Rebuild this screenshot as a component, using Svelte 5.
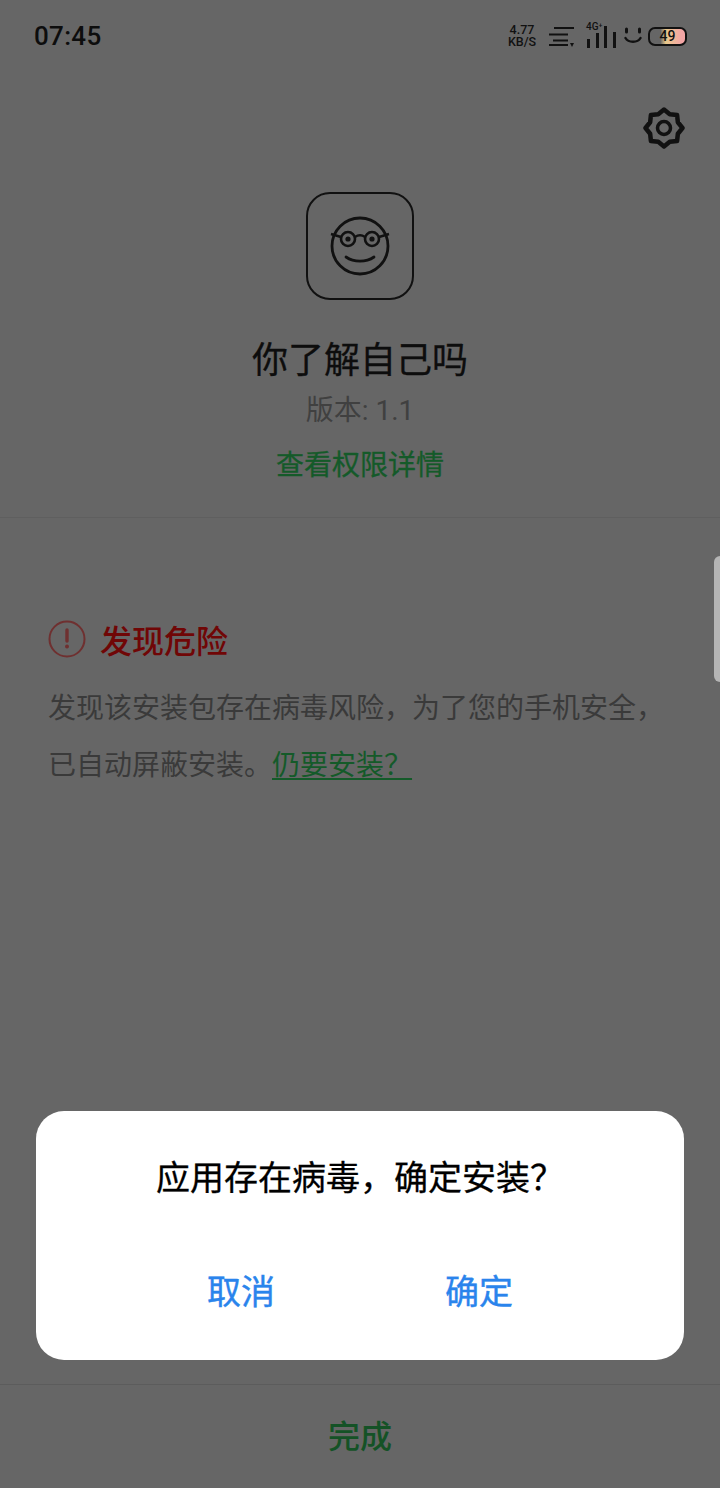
<script>
  const bars = [
    { h: 9 },
    { h: 15 },
    { h: 22 },
    { h: 16 }
  ];
  const c = 21;
  const gear = Array.from({ length: 16 }, (_, i) => {
    const r = i % 2 === 0 ? 18.500 : 15;
    const a = (i * Math.PI) / 8 - Math.PI / 2;
    return `${(c + r * Math.cos(a)).toFixed(2)},${(c + r * Math.sin(a)).toFixed(2)}`;
  }).join(" ");
</script>

<div class="page">
  <header class="status">
    <span class="time">07:45</span>
    <div class="status-icons">
      <span class="speed"><span>4.77</span><span>KB/S</span></span>
      <svg class="wifi" width="28" height="22" viewBox="0 0 28 22">
        <path d="M6 3H26M1 9.500H20M5 15.500H20M1 20H20" stroke="#111" stroke-width="2.200" fill="none" />
        <path d="M22 18h4l-2 4z" fill="#111" />
      </svg>
      <div class="signal">
        <span class="net">4G⁺</span>
        <div class="bars">
          {#each bars as b}
            <i style="height:{b.h}px"></i>
          {/each}
        </div>
      </div>
      <svg class="smile" width="18" height="18" viewBox="0 0 18 18">
        <path d="M2.500 2v3M15.500 2v3" stroke="#111" stroke-width="3" stroke-linecap="round" />
        <path d="M1.500 11c3 5 12 5 15 0" stroke="#111" stroke-width="2.400" fill="none" stroke-linecap="round" />
      </svg>
      <div class="battery"><span>49</span></div>
    </div>
  </header>

  <div class="tools">
    <svg width="42" height="42" viewBox="0 0 42 42" fill="none" stroke="#111" stroke-width="4.500" stroke-linejoin="round">
      <polygon points={gear} />
      <circle cx="21" cy="21" r="6.500" stroke-width="3.500" />
    </svg>
  </div>

  <section class="app-info">
    <div class="app-icon">
      <svg width="60" height="60" viewBox="0 0 60 60" fill="none" stroke="#111">
        <circle cx="30" cy="30" r="28" stroke-width="2.800" />
        <circle cx="18" cy="23" r="7" stroke-width="2.600" />
        <circle cx="42" cy="23" r="7" stroke-width="2.600" />
        <path d="M25 21c3-2 7-2 10 0M11 21L1 18M49 21L59 18" stroke-width="2.400" />
        <circle cx="18" cy="23" r="2.600" fill="#111" stroke="none" />
        <circle cx="42" cy="23" r="2.600" fill="#111" stroke="none" />
        <path d="M16 41c8 5.500 20 5.500 28 0" stroke-width="2.800" stroke-linecap="round" />
      </svg>
    </div>
    <h1>你了解自己吗</h1>
    <p class="version">版本: 1.1</p>
    <a class="perm">查看权限详情</a>
  </section>

  <section class="warn">
    <div class="warn-title">
      <svg width="38" height="38" viewBox="0 0 38 38" fill="none">
        <circle cx="19" cy="19" r="17.500" stroke="#6f3030" stroke-width="2" />
        <path d="M19 10v11" stroke="#6f3030" stroke-width="3.400" stroke-linecap="round" />
        <circle cx="19" cy="26.500" r="2" fill="#6f3030" />
      </svg>
      <h2>发现危险</h2>
    </div>
    <p class="warn-body">发现该安装包存在病毒风险，为了您的手机安全，<br />已自动屏蔽安装。<a>仍要安装？</a></p>
  </section>

  <footer class="foot"><span>完成</span></footer>

  <div class="handle"></div>

  <div class="dialog">
    <p class="dialog-title">应用存在病毒，确定安装？</p>
    <div class="dialog-actions">
      <button>取消</button>
      <button>确定</button>
    </div>
  </div>
</div>

<style>
  :global(body) {
    margin: 0;
    background: #666;
  }
  .page {
    position: relative;
    width: 720px;
    height: 1488px;
    overflow: hidden;
    background: #666;
    display: flex;
    flex-direction: column;
    font-family: "Noto Sans CJK SC", "Noto Sans", sans-serif;
    color: #111;
  }
  .status {
    height: 72px;
    padding: 0 33px 0 34px;
    display: flex;
    align-items: center;
    justify-content: space-between;
    box-sizing: border-box;
  }
  .time {
    font-family: Roboto, sans-serif;
    font-weight: 500;
    font-size: 26px;
    letter-spacing: 0.300px;
    color: #0d0d0d;
  }
  .status-icons {
    display: flex;
    align-items: center;
    gap: 8px;
  }
  .speed {
    display: flex;
    flex-direction: column;
    align-items: center;
    font-family: Roboto, sans-serif;
    font-weight: 500;
    font-size: 12.500px;
    line-height: 12px;
    width: 30px;
    color: #111;
  }
  .wifi {
    margin-left: 3px;
  }
  .signal {
    position: relative;
    width: 30px;
    height: 24px;
    margin-left: 2px;
  }
  .net {
    position: absolute;
    left: 0;
    top: -2px;
    font-family: Roboto, sans-serif;
    font-size: 10px;
    line-height: 10px;
    font-weight: 500;
  }
  .bars {
    position: absolute;
    inset: 0;
    display: flex;
    align-items: flex-end;
    justify-content: space-between;
  }
  .bars i {
    width: 3px;
    background: #111;
  }
  .bars i:first-child {
    margin-left: 1px;
  }
  .smile {
    margin-right: -2px;
  }
  .battery {
    width: 39px;
    height: 19px;
    border: 2px solid #111;
    border-radius: 7px;
    box-sizing: border-box;
    background: linear-gradient(90deg, #666 0 30%, #e8c98a 45%, #f3a5a5 90%);
    display: flex;
    align-items: center;
    justify-content: center;
    font-family: Roboto, sans-serif;
    font-size: 14px;
    font-weight: 500;
    color: #111;
  }
  .tools {
    height: 62px;
    display: flex;
    justify-content: flex-end;
    align-items: flex-start;
    padding: 35px 35px 0 0;
  }
  .app-info {
    margin-top: 23px;
    height: 326px;
    box-sizing: border-box;
    border-bottom: 1px solid #5f5f5f;
    display: flex;
    flex-direction: column;
    align-items: center;
  }
  .app-icon {
    width: 108px;
    height: 108px;
    box-sizing: border-box;
    border: 2px solid #111;
    border-radius: 24px;
    display: flex;
    align-items: center;
    justify-content: center;
  }
  h1 {
    margin: 32px 0 0;
    font-size: 36px;
    line-height: 50px;
    font-weight: 400;
    color: #0d0d0d;
    -webkit-text-stroke: 0.300px #0d0d0d;
  }
  .version {
    margin: 7px 0 0;
    font-family: Roboto, "Noto Sans CJK SC", sans-serif;
    font-size: 28px;
    line-height: 44px;
    color: #404040;
  }
  .perm {
    margin-top: 10px;
    font-size: 28px;
    line-height: 40px;
    font-weight: 400;
    color: #145a29;
    -webkit-text-stroke: 0.300px #145a29;
  }
  .warn {
    padding: 96px 48px 0;
  }
  .warn-title {
    display: flex;
    align-items: center;
    gap: 14px;
    height: 50px;
  }
  h2 {
    margin: 0;
    font-size: 32px;
    line-height: 50px;
    font-weight: 500;
    color: #700606;
  }
  .warn-body {
    margin: 14px 0 0;
    font-size: 28px;
    line-height: 57px;
    color: #3a3a3a;
    white-space: nowrap;
  }
  .warn-body a {
    color: #145a29;
    text-decoration: underline;
    text-underline-offset: 3px;
    text-decoration-thickness: 1.500px;
  }
  .foot {
    margin-top: auto;
    height: 104px;
    padding-bottom: 6px;
    box-sizing: border-box;
    border-top: 1px solid #5c5c5c;
    display: flex;
    align-items: center;
    justify-content: center;
    font-size: 32px;
    font-weight: 500;
    color: #145226;
  }
  .handle {
    position: absolute;
    right: 0;
    top: 556px;
    width: 6px;
    height: 126px;
    background: #b5b5b5;
    border-radius: 6px 0 0 6px;
  }
  .dialog {
    position: absolute;
    left: 36px;
    top: 1111px;
    width: 648px;
    height: 249px;
    background: #fff;
    border-radius: 28px;
    display: flex;
    flex-direction: column;
    align-items: center;
  }
  .dialog-title {
    margin: 41px 0 0;
    font-size: 34px;
    line-height: 48px;
    color: #000;
    white-space: nowrap;
    -webkit-text-stroke: 0.300px #000;
  }
  .dialog-actions {
    margin-top: 67px;
    display: flex;
    width: 306px;
    justify-content: space-between;
  }
  button {
    width: 68px;
    padding: 0;
    border: 0;
    background: none;
    font-family: inherit;
    font-size: 34px;
    line-height: 46px;
    white-space: nowrap;
    font-weight: 400;
    color: #2a84ec;
    -webkit-text-stroke: 0.400px #2a84ec;
  }
</style>
